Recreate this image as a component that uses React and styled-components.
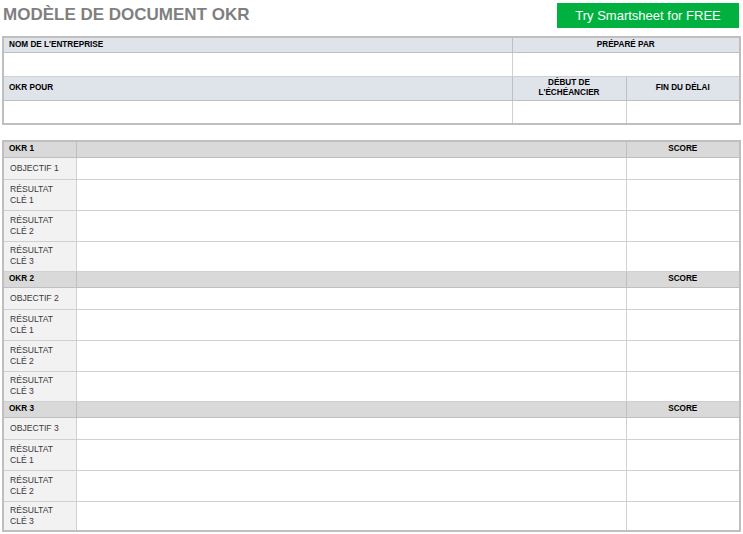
import React from 'react';
import styled, { createGlobalStyle } from 'styled-components';

const GlobalStyle = createGlobalStyle`
    html, body {
        margin: 0;
        padding: 0;
        background: #ffffff;
    }
    body {
        font-family: "Liberation Sans", Arial, sans-serif;
    }
`;

const Page = styled.div`
    width: 743px;
    height: 534px;
    box-sizing: border-box;
    padding: 3px 4px 0 2px;
    overflow: hidden;
`;

const Header = styled.div`
    display: flex;
    justify-content: space-between;
    align-items: flex-start;
    height: 33px;
`;

const Title = styled.div`
    font-size: 17px;
    font-weight: bold;
    color: #7f7f7f;
    margin-left: 1px;
    margin-top: 2px;
`;

const TryButton = styled.div`
    width: 182px;
    height: 25px;
    background: #00b140;
    color: #ffffff;
    font-size: 13px;
    display: flex;
    align-items: center;
    justify-content: center;
`;

const Table = styled.table`
    width: 737px;
    border-collapse: collapse;
    table-layout: fixed;
    border: 2px solid #bfbfbf;
    margin-top: ${p => p.$gap || 0}px;
    font-size: 8.2px;
    color: #000;
`;

const Row = styled.tr`
    height: ${p => p.$h}px;
`;

const HeadCell = styled.td`
    border: 1px solid #bfbfbf;
    background: ${p => p.$bg || '#dfe3ea'};
    font-weight: bold;
    text-align: ${p => p.$align || 'left'};
    padding: 0 5px;
    line-height: 10px;
`;

const Cell = styled.td`
    border: 1px solid #d0d0d0;
    background: #ffffff;
    padding: 0;
`;

const Label = styled.td`
    border: 1px solid #d0d0d0;
    background: #f2f2f2;
    color: #3a3a3a;
    padding: 0 6px;
    line-height: 11px;
    font-size: 8.6px;
`;

const blocks = [1, 2, 3];
const resultHeights = [31, 31, 30];

export default function App() {
    return (
        <Page>
            <GlobalStyle />
            <Header>
                <Title>MODÈLE DE DOCUMENT OKR</Title>
                <TryButton>Try Smartsheet for FREE</TryButton>
            </Header>

            <Table>
                <colgroup>
                    <col style={{ width: 509 }} />
                    <col style={{ width: 114 }} />
                    <col style={{ width: 114 }} />
                </colgroup>
                <tbody>
                    <Row $h={15}>
                        <HeadCell>NOM DE L'ENTREPRISE</HeadCell>
                        <HeadCell colSpan={2} $align="center">PRÉPARÉ PAR</HeadCell>
                    </Row>
                    <Row $h={24}>
                        <Cell />
                        <Cell colSpan={2} />
                    </Row>
                    <Row $h={24}>
                        <HeadCell>OKR POUR</HeadCell>
                        <HeadCell $align="center">DÉBUT DE<br />L'ÉCHÉANCIER</HeadCell>
                        <HeadCell $align="center">FIN DU DÉLAI</HeadCell>
                    </Row>
                    <Row $h={24}>
                        <Cell />
                        <Cell />
                        <Cell />
                    </Row>
                </tbody>
            </Table>

            <Table $gap={15}>
                <colgroup>
                    <col style={{ width: 73 }} />
                    <col style={{ width: 550 }} />
                    <col style={{ width: 114 }} />
                </colgroup>
                <tbody>
                    {blocks.map(n => (
                        <React.Fragment key={n}>
                            <Row $h={16}>
                                <HeadCell $bg="#d9d9d9">OKR {n}</HeadCell>
                                <HeadCell $bg="#d9d9d9" />
                                <HeadCell $bg="#d9d9d9" $align="center">SCORE</HeadCell>
                            </Row>
                            <Row $h={22}>
                                <Label>OBJECTIF {n}</Label>
                                <Cell />
                                <Cell />
                            </Row>
                            {resultHeights.map((h, i) => (
                                <Row $h={h} key={i}>
                                    <Label>RÉSULTAT<br />CLÉ {i + 1}</Label>
                                    <Cell />
                                    <Cell />
                                </Row>
                            ))}
                        </React.Fragment>
                    ))}
                </tbody>
            </Table>
        </Page>
    );
}
